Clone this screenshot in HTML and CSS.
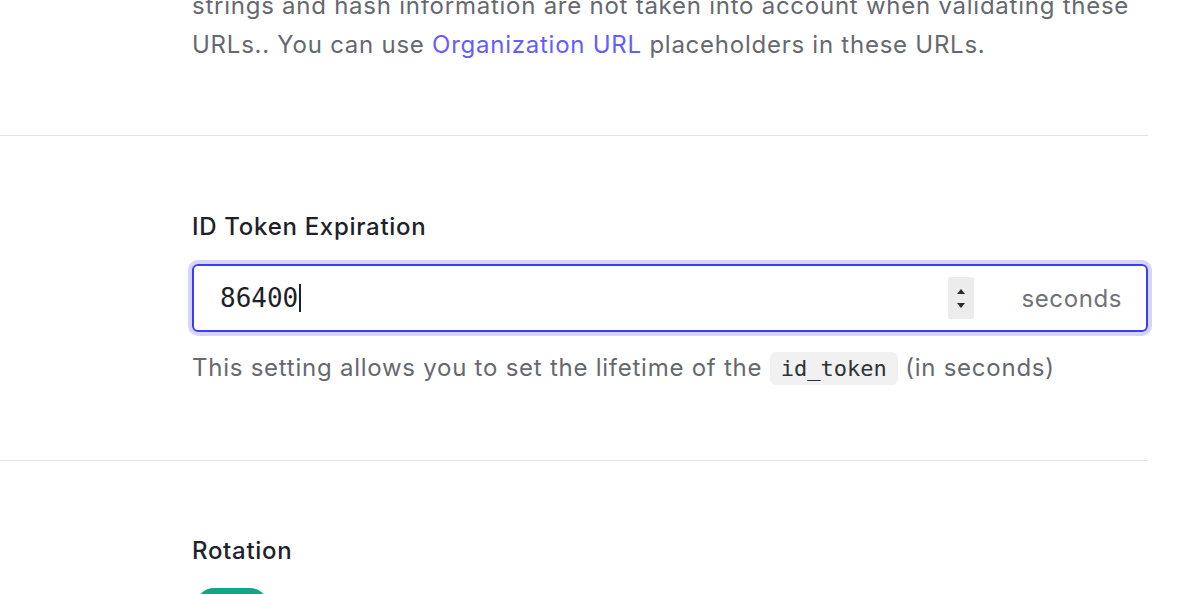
FILE: index.html
```html
<!DOCTYPE html>
<html lang="en">
<head>
<meta charset="utf-8">
<link rel="stylesheet" href="styles.css">
</head>
<body>
<div class="page">
  <section class="section first">
    <p class="help">strings and hash information are not taken into account when validating these URLs.. You can use <a class="link" href="#">Organization URL</a> placeholders in these URLs.</p>
  </section>
  <section class="section middle">
    <div class="label">ID Token Expiration</div>
    <div class="field">
      <div class="value">86400<span class="caret"></span></div>
      <div class="spinner">
        <svg width="26" height="42" viewBox="0 0 26 42"><path d="M9 17 L13 12 L17 17 Z" fill="#2b2b2b"/><path d="M9 26 L17 26 L13 31 Z" fill="#2b2b2b"/></svg>
      </div>
      <div class="unit">seconds</div>
    </div>
    <p class="help">This setting allows you to set the lifetime of the <code class="code">id_token</code> (in seconds)</p>
  </section>
  <section class="section last">
    <div class="label">Rotation</div>
    <div class="toggle"></div>
  </section>
</div>
</body>
</html>
```

FILE: styles.css
```css
html, body {
  margin: 0;
  padding: 0;
  background: #ffffff;
}
body {
  font-family: Inter, "Noto Sans", sans-serif;
  overflow: hidden;
  height: 594px;
}
.page {
  width: 1148px;
  margin-top: -14px;
}
.section {
  padding-left: 192px;
  border-bottom: 1px solid #e3e3e3;
}
.section.first {
  padding-bottom: 71px;
}
.section.middle {
  padding-top: 76px;
  padding-bottom: 72px;
}
.section.last {
  border-bottom: none;
  padding-top: 75px;
}
.help {
  margin: 0;
  font-size: 24px;
  letter-spacing: 0.75px;
  line-height: 39px;
  color: #66686f;
}
.link {
  color: #635dff;
  text-decoration: none;
}
.label {
  font-size: 24px;
  letter-spacing: 0.7px;
  line-height: 30px;
  color: #1e212a;
  font-weight: 500;
  margin-bottom: 22px;
}
.field {
  display: flex;
  align-items: center;
  height: 68px;
  box-sizing: border-box;
  border: 2px solid #3c3cf2;
  border-radius: 6px;
  box-shadow: 0 0 0 4px #d6d4fd;
  padding: 0 24px 0 26px;
  margin-bottom: 16px;
}
.value {
  flex: 1;
  font-family: "DejaVu Sans Mono", "Liberation Mono", monospace;
  font-size: 26px;
  color: #1e212a;
  display: flex;
  align-items: center;
}
.caret {
  display: inline-block;
  width: 1.5px;
  height: 28px;
  background: #1e212a;
  margin-left: 1px;
}
.spinner {
  width: 26px;
  height: 42px;
  background: #ececec;
  border-radius: 2px;
  margin-right: 47px;
}
.spinner svg {
  display: block;
}
.unit {
  font-size: 24px;
  letter-spacing: 0.6px;
  color: #707279;
}
.code {
  font-family: "DejaVu Sans Mono", "Liberation Mono", monospace;
  font-size: 22px;
  letter-spacing: 0;
  background: #f1f1f1;
  color: #2f3138;
  border-radius: 6px;
  padding: 4px 11px;
}
.toggle {
  width: 72px;
  height: 36px;
  border-radius: 18px;
  background: #13a587;
  margin-left: 4px;
}
```
